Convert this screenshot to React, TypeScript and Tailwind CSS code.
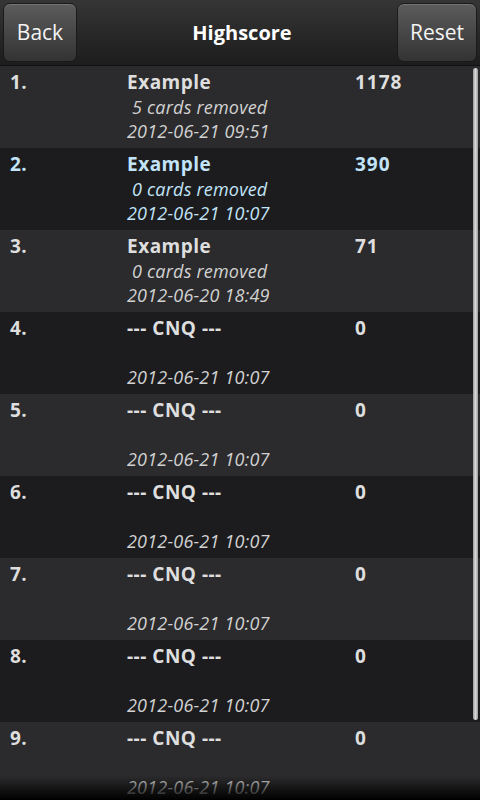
import React from 'react'

type Score = {
  name: string
  removed?: number
  date: string
  score: number
}

const scores: Score[] = [
  { name: 'Example', removed: 5, date: '2012-06-21 09:51', score: 1178 },
  { name: 'Example', removed: 0, date: '2012-06-21 10:07', score: 390 },
  { name: 'Example', removed: 0, date: '2012-06-20 18:49', score: 71 },
  { name: '--- CNQ ---', date: '2012-06-21 10:07', score: 0 },
  { name: '--- CNQ ---', date: '2012-06-21 10:07', score: 0 },
  { name: '--- CNQ ---', date: '2012-06-21 10:07', score: 0 },
  { name: '--- CNQ ---', date: '2012-06-21 10:07', score: 0 },
  { name: '--- CNQ ---', date: '2012-06-21 10:07', score: 0 },
  { name: '--- CNQ ---', date: '2012-06-21 10:07', score: 0 },
]

// highlighted entry = the latest game
const currentIndex = 1

function HeaderButton({ label, width }: { label: string; width: string }) {
  return (
    <button className={`${width} shrink-0 h-[59px] rounded-[7px] border border-[#1a1a1a] bg-gradient-to-b from-[#5c5c5c] to-[#333333] text-[21px] text-[#f4f4f4] shadow-[inset_0_1px_0_rgba(255,255,255,0.15)]`}>
      {label}
    </button>
  )
}

function Row({ entry, index }: { entry: Score; index: number }) {
  const active = index === currentIndex
  const bg = index % 2 === 0 ? 'bg-[#2b2b2d]' : 'bg-[#1c1c1e]'
  const main = active ? 'text-[#c2e4f8]' : 'text-[#dedede]'
  const sub = active ? 'text-[#c2e4f8]' : 'text-[#d2d2d2]'

  return (
    <div className={`${bg} h-[82px] pl-[10px] pt-[4px] grid grid-cols-[117px_228px_1fr] leading-[25px]`}>
      <div className={`${main} font-bold text-[19px] tracking-[0.3px]`}>{index + 1}.</div>
      <div className="flex flex-col">
        <div className={`${main} font-bold text-[19px] tracking-[0.5px]`}>{entry.name}</div>
        <div className={`${sub} italic text-[18px] pl-[5px] h-[25px] tracking-[0.2px]`}>
          {entry.removed !== undefined ? `${entry.removed} cards removed` : ''}
        </div>
        <div className={`${sub} italic text-[18px] leading-[23px] tracking-[0.2px]`}>{entry.date}</div>
      </div>
      <div className={`${main} font-bold text-[19px] tracking-[1px]`}>{entry.score}</div>
    </div>
  )
}

export default function App() {
  return (
    <div
      className="relative w-[480px] h-[800px] overflow-hidden bg-black"
      style={{ fontFamily: '"Open Sans", "Noto Sans", sans-serif' }}
    >
      {/* 标题栏 */}
      <div className="h-[66px] flex items-center pl-[3px] pr-[3px] bg-gradient-to-b from-[#353535] to-[#1d1d1d] border-b border-[#111]">
        <HeaderButton label="Back" width="w-[74px]" />
        <h1 className="flex-1 pl-[10px] text-center text-[20px] font-bold text-white">Highscore</h1>
        <HeaderButton label="Reset" width="w-[80px]" />
      </div>

      {/* 列表 */}
      <div className="flex flex-col">
        {scores.map((entry, i) => (
          <Row key={i} entry={entry} index={i} />
        ))}
      </div>

      {/* 滚动条 */}
      <div className="absolute left-[473px] top-[68px] w-[5px] h-[652px] rounded-full bg-gradient-to-r from-[#9a9a9a] via-[#d8d8d8] to-[#9a9a9a]" />

      {/* 底部渐隐 */}
      <div className="absolute left-0 bottom-0 w-full h-[24px] bg-gradient-to-b from-transparent to-black pointer-events-none" />
    </div>
  )
}
